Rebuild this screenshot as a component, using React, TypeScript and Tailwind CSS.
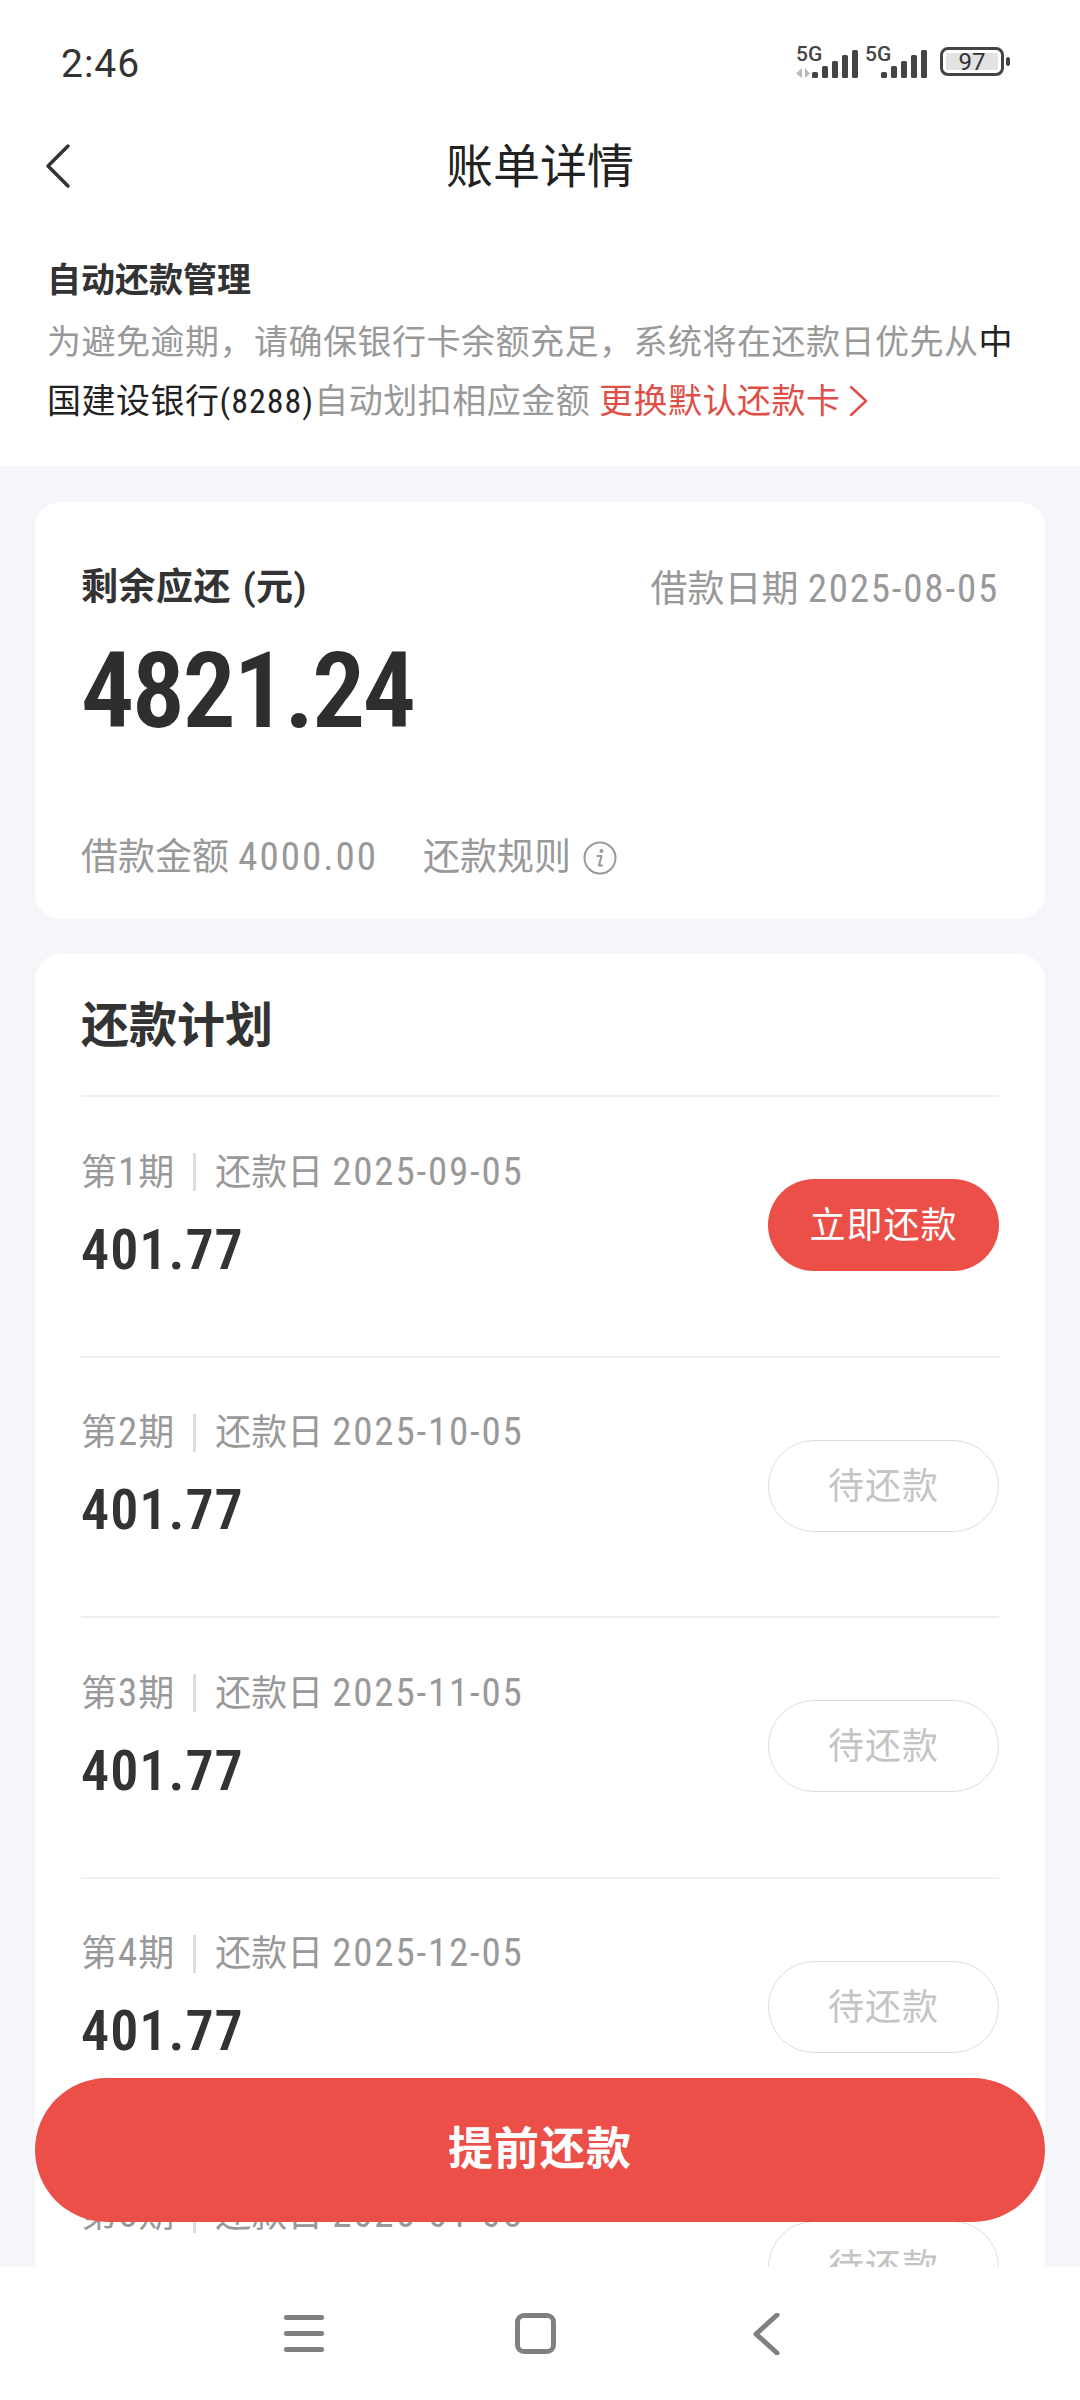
import React from "react";

const FONT = "font-['Roboto','Noto_Sans_CJK_SC',sans-serif]";
// DIN style digits in the picture, condensed Roboto is the nearest installed
const NUM = "[font-stretch:75%]";

const plans = [
  { no: 1, date: "2025-09-05", active: true },
  { no: 2, date: "2025-10-05", active: false },
  { no: 3, date: "2025-11-05", active: false },
  { no: 4, date: "2025-12-05", active: false },
  { no: 5, date: "2026-01-05", active: false },
];

function Signal({ arrows }: { arrows?: boolean }) {
  return (
    <svg className="overflow-visible" width="62" height="33" viewBox="0 0 62 33">
      <text x="0" y="16" fontSize="21" fontWeight="500" fill="#444" fontFamily="Roboto, sans-serif">
        5G
      </text>
      {arrows && (
        <g fill="#bbb">
          <path d="M6 23v10L0 28.5zM9 23l5 5.5-5 4.5z" />
        </g>
      )}
      <g fill="#444">
        <rect x="16" y="27" width="6" height="6" rx="1.5" />
        <rect x="26" y="21" width="6" height="12" rx="1.5" />
        <rect x="36" y="16" width="6" height="17" rx="1.5" />
        <rect x="46" y="10" width="6" height="23" rx="1.5" />
        <rect x="56" y="5" width="6" height="28" rx="1.5" />
      </g>
    </svg>
  );
}

function StatusBar() {
  return (
    <div className="h-[100px] pt-[39px] pl-[61px] pr-[70px] flex items-start justify-between">
      <span className="text-[39px] leading-[50px] text-[#333] font-normal tracking-[1px]">2:46</span>
      <div className="flex items-center gap-[7px] mt-[6px]">
        <Signal arrows />
        <Signal />
        <div className="ml-[6px] flex items-center gap-[2px]">
          <div className="w-[64px] h-[29px] border-[3px] border-[#444] rounded-[8px] p-[3px] flex">
            <div className="flex-1 bg-[#e2e2e2] rounded-[2px] flex items-center justify-center text-[24px] leading-none text-[#333]">
              97
            </div>
          </div>
          <div className="w-[4px] h-[9px] bg-[#444] rounded-[2px]" />
        </div>
      </div>
    </div>
  );
}

function Header() {
  return (
    <div className="relative h-[130px] flex items-center justify-center">
      <svg className="absolute left-[44px] top-[43px]" width="28" height="46" viewBox="0 0 28 46" fill="none">
        <path d="M24 3L4 23l20 20" stroke="#333" strokeWidth="3.5" strokeLinecap="round" strokeLinejoin="round" />
      </svg>
      <h1 className="mt-[2px] text-[47px] leading-none text-[#222] font-normal">账单详情</h1>
    </div>
  );
}

function AutoRepayNotice() {
  return (
    <div className="bg-white px-[47px] pt-[29px] h-[236px]">
      <div className="text-[34px] leading-[42px] font-bold text-[#333]">自动还款管理</div>
      <p className="mt-[12px] text-[34px] leading-[59px] tracking-[0.5px] text-[#999]">
        为避免逾期，请确保银行卡余额充足，系统将在还款日优先从
        <span className="text-[#222]">中国建设银行</span>
        <span className={`${NUM} text-[#222] tracking-[1px]`}>(8288)</span>
        自动划扣相应金额 <span className="text-[#e04f47]">更换默认还款卡</span>
        <svg className="inline-block ml-[8px] align-[-4px]" width="20" height="32" viewBox="0 0 20 32" fill="none">
          <path d="M2 2l15 14L2 30" stroke="#e04f47" strokeWidth="2.5" strokeLinecap="round" strokeLinejoin="round" />
        </svg>
      </p>
    </div>
  );
}

function SummaryCard() {
  return (
    <div className="bg-white rounded-[26px] h-[417px] px-[46px] pt-[66px] flex flex-col">
      <div className="flex justify-between items-start">
        <span className="text-[37px] leading-[40px] font-semibold text-[#333] tracking-[0.5px]">
          剩余应还 <span className="ml-[2px]">(元)</span>
        </span>
        <span className="mt-[1px] text-[37px] leading-[40px] text-[#999]">
          借款日期 <span className={`${NUM} text-[39px] tracking-[1.8px]`}>2025-08-05</span>
        </span>
      </div>
      <div className={`${NUM} mt-[21px] text-[106px] leading-[120px] font-semibold text-[#2e2e30] tracking-[-2.5px]`}>
        4821.24
      </div>
      <div className="mt-[84px] flex items-center text-[37px] leading-[44px] text-[#999]">
        <span>
          借款金额 <span className={`${NUM} text-[39px] tracking-[2px]`}>4000.00</span>
        </span>
        <span className="ml-[45px]">还款规则</span>
        <svg className="ml-[12px]" width="34" height="34" viewBox="0 0 34 34" fill="none">
          <circle cx="17" cy="17" r="15.5" stroke="#999" strokeWidth="2" />
          <circle cx="18.5" cy="10" r="2" fill="#999" />
          <path d="M14.5 15h4l-2.5 9.5h3" stroke="#999" strokeWidth="2" strokeLinecap="round" strokeLinejoin="round" />
        </svg>
      </div>
    </div>
  );
}

function PlanRow({ no, date, active }: { no: number; date: string; active: boolean }) {
  return (
    <div className="h-[260.5px] pb-[2px] border-t-2 border-[#f0f0f2] flex items-center justify-between">
      <div className="-mt-[16px]">
        <div className="flex items-center text-[36px] leading-[44px] text-[#999]">
          <span>
            第<span className={`${NUM} text-[39px] mx-[1px]`}>{no}</span>期
          </span>
          <span className="mx-[19px] w-[3px] h-[38px] bg-[#ddd]" />
          <span>
            还款日 <span className={`${NUM} text-[39px] tracking-[1.8px]`}>{date}</span>
          </span>
        </div>
        <div className={`${NUM} mt-[20px] text-[56px] leading-[70px] font-semibold text-[#333] tracking-[1px]`}>
          401.77
        </div>
      </div>
      <button
        className={
          active
            ? "w-[231px] h-[92px] pt-[2px] rounded-full bg-[#ec4f47] text-white text-[36px] tracking-[1px]"
            : "w-[231px] h-[92px] pt-[2px] rounded-full border border-[#ddd] text-[#c4c4c4] bg-white text-[36px] tracking-[1px]"
        }
      >
        {active ? "立即还款" : "待还款"}
      </button>
    </div>
  );
}

function PlanCard() {
  return (
    <div className="mt-[35px] bg-white rounded-t-[26px] px-[46px] pb-[40px]">
      <h2 className="h-[141px] pt-[44px] text-[48px] leading-[56px] font-bold text-[#333]">还款计划</h2>
      {plans.map((p) => (
        <PlanRow key={p.no} no={p.no} date={p.date} active={p.active} />
      ))}
    </div>
  );
}

function NavBar() {
  return (
    <div className="h-[133px] shrink-0 bg-white flex items-center justify-center pr-[16px]">
      <div className="flex flex-col gap-[11px] w-[40px]">
        <div className="h-[5px] rounded-[2px] bg-[#808080]" />
        <div className="h-[5px] rounded-[2px] bg-[#808080]" />
        <div className="h-[5px] rounded-[2px] bg-[#808080]" />
      </div>
      <div className="ml-[191px] w-[41px] h-[41px] border-[5px] border-[#808080] rounded-[9px]" />
      <svg className="ml-[196px]" width="28" height="42" viewBox="0 0 28 42" fill="none">
        <path d="M25 2L4 21l21 19" stroke="#808080" strokeWidth="5" strokeLinecap="round" strokeLinejoin="round" />
      </svg>
    </div>
  );
}

export default function App() {
  return (
    <div className={`${FONT} relative w-[1080px] h-[2400px] overflow-hidden bg-white flex flex-col`}>
      <StatusBar />
      <Header />
      <AutoRepayNotice />
      <div className="flex-1 overflow-hidden bg-[#f5f6fa] px-[35px] pt-[36px]">
        <SummaryCard />
        <PlanCard />
      </div>
      <NavBar />
      <button className="absolute left-[35px] top-[2078px] w-[1010px] h-[144px] rounded-full bg-[#ec4f47] text-white text-[45px] font-bold tracking-[1px]">
        提前还款
      </button>
    </div>
  );
}
